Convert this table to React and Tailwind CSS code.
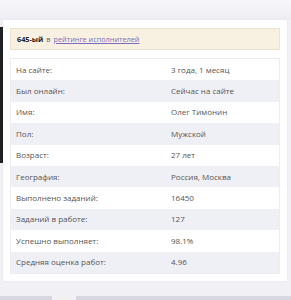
const rows = [
  ["На сайте:", "3 года, 1 месяц"],
  ["Был онлайн:", "Сейчас на сайте"],
  ["Имя:", "Олег Тимонин"],
  ["Пол:", "Мужской"],
  ["Возраст:", "27 лет"],
  ["География:", "Россия, Москва"],
  ["Выполнено заданий:", "16450"],
  ["Заданий в работе:", "127"],
  ["Успешно выполняет:", "98.1%"],
  ["Средняя оценка работ:", "4.96"],
];

export default function App() {
  return (
    <div
      className="relative h-[300px] w-[291px] overflow-hidden bg-[#f1f1f5] text-[#444]"
      style={{ fontFamily: '"Open Sans", "Noto Sans", sans-serif' }}
    >
      <div className="h-[20px] bg-gradient-to-b from-[#f7f7fa] to-[#ededf3]" />
      <div className="absolute left-0 top-[27px] h-[136px] w-[4px] bg-[#222]" />
      <div className="relative ml-[3px] w-[284px] bg-white px-[7px] pt-[8px] pb-[7px] shadow-[0_0_2px_rgba(0,0,0,0.06)]">
        <div className="flex h-[22px] items-center border border-[#ebe2cc] bg-[#f8f1e1] px-[6px] text-[7.3px]">
          <span className="font-bold text-[#222]">645-ый</span>
          <span className="ml-[3px] text-[#666]">в</span>
          <a className="ml-[3px] text-[#7b6bbd] underline">рейтинге исполнителей</a>
        </div>
        <div className="mt-[8px] border border-[#ececf2]">
          {rows.map(([label, value], i) => (
            <div
              key={label}
              className={`flex h-[21.4px] items-center text-[8px] ${
                i % 2 ? "bg-[#efeff6]" : "bg-white"
              }`}
            >
              <div className="w-[160px] pl-[5px] text-[#555]">{label}</div>
              <div className="text-[#555]">{value}</div>
            </div>
          ))}
        </div>
      </div>
      <div className="absolute bottom-0 left-0 flex h-[4px] w-full gap-[24px]">
        <div className="w-[52px] bg-[#d8d8e0]" />
        <div className="flex-1 bg-[#d8d8e0]" />
      </div>
    </div>
  );
}
